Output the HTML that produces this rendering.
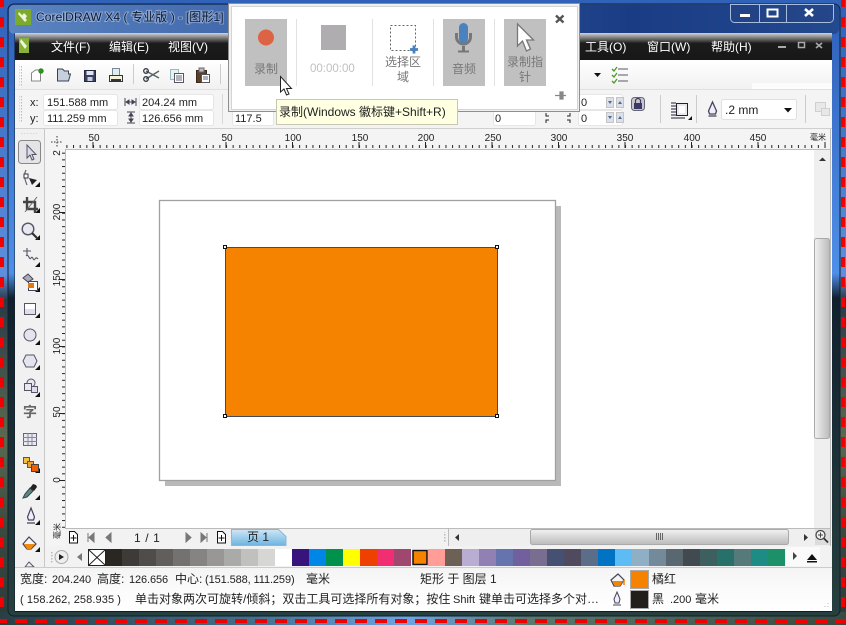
<!DOCTYPE html>
<html><head><meta charset="utf-8"><style>
html,body{margin:0;padding:0;background:#fff;width:846px;height:625px;overflow:hidden}
svg{display:block;position:absolute;left:0;top:0}
text{font-family:"Liberation Sans","Noto Sans CJK SC",sans-serif;font-size:12px;fill:#222;white-space:pre}
.m{fill:#fff;font-size:12px}
.s{font-size:11px}
.r{font-size:10px;fill:#222}
.g{fill:#777}
</style></head><body>
<svg width="846" height="625" viewBox="0 0 846 625" xmlns="http://www.w3.org/2000/svg">
<defs>
<linearGradient id="desk" x1="0" y1="0" x2="0" y2="1"><stop offset="0" stop-color="#2f62b8"/><stop offset=".44" stop-color="#5f8fdc"/><stop offset=".48" stop-color="#2a3a48"/><stop offset=".7" stop-color="#5a6a50"/><stop offset=".85" stop-color="#3a4a40"/><stop offset="1" stop-color="#2a3a3a"/></linearGradient>
<linearGradient id="side" x1="0" y1="0" x2="0" y2="1"><stop offset="0" stop-color="#2f5fb8"/><stop offset=".44" stop-color="#4f8fe8"/><stop offset=".48" stop-color="#12202e"/><stop offset="1" stop-color="#27403f"/></linearGradient>
<linearGradient id="title" x1="0" y1="0" x2="1" y2="0"><stop offset="0" stop-color="#5b84c2"/><stop offset=".3" stop-color="#3e66aa"/><stop offset=".75" stop-color="#1a3c84"/><stop offset="1" stop-color="#23498f"/></linearGradient>
<linearGradient id="menu" x1="0" y1="0" x2="0" y2="1"><stop offset="0" stop-color="#d4d4d4"/><stop offset=".12" stop-color="#9a9a9a"/><stop offset=".38" stop-color="#1c1c1c"/><stop offset="1" stop-color="#171717"/></linearGradient>
<linearGradient id="tb" x1="0" y1="0" x2="0" y2="1"><stop offset="0" stop-color="#fff"/><stop offset="1" stop-color="#f1f1f1"/></linearGradient>
<linearGradient id="tab" x1="0" y1="0" x2="0" y2="1"><stop offset="0" stop-color="#cfe6f6"/><stop offset="1" stop-color="#6db4e0"/></linearGradient>
<linearGradient id="thumb" x1="0" y1="0" x2="0" y2="1"><stop offset="0" stop-color="#f2f2f2"/><stop offset=".5" stop-color="#d6d6d6"/><stop offset="1" stop-color="#bbb"/></linearGradient>
<linearGradient id="thumbv" x1="0" y1="0" x2="1" y2="0"><stop offset="0" stop-color="#f2f2f2"/><stop offset=".5" stop-color="#d6d6d6"/><stop offset="1" stop-color="#bbb"/></linearGradient>
<linearGradient id="stat" x1="0" y1="0" x2="0" y2="1"><stop offset="0" stop-color="#f4f4f4"/><stop offset=".5" stop-color="#fbfbfb"/><stop offset="1" stop-color="#fff"/></linearGradient>
<linearGradient id="btm" x1="0" y1="0" x2="1" y2="0"><stop offset="0" stop-color="#2a3f44"/><stop offset=".3" stop-color="#44708c"/><stop offset=".48" stop-color="#6ea4e4"/><stop offset=".62" stop-color="#5a7a70"/><stop offset="1" stop-color="#3a4a40"/></linearGradient>
<pattern id="tx" x="93" y="145" width="6.65" height="4" patternUnits="userSpaceOnUse"><rect width="1" height="3" fill="#222"/></pattern>
<pattern id="ty" x="62" y="480" width="3" height="6.68" patternUnits="userSpaceOnUse"><rect width="3" height="1" fill="#222"/></pattern>
<pattern id="gr" width="3" height="3" patternUnits="userSpaceOnUse"><rect width="1.5" height="1.5" fill="#bbb"/></pattern>
</defs>

<!-- desktop and frame -->
<rect width="846" height="625" fill="url(#desk)"/>
<rect x="0" y="612" width="846" height="13" fill="url(#btm)"/>
<rect x="8" y="4" width="832" height="612" rx="6" fill="url(#side)" stroke="#10202c"/>
<rect x="9" y="5" width="830" height="29" rx="5" fill="url(#title)"/>
<rect x="14.5" y="33" width="817" height="579" fill="#0f1c24"/>

<!-- title bar -->
<rect x="15" y="9" width="16" height="16" fill="#7cab2c"/>
<path d="M19 12l8 8-2 2-7-8zM24 13l3 3-3 5-3-4z" fill="#eef5df"/>
<text x="36" y="21" style="font-size:12px;letter-spacing:.1px;fill:#0d1a30;paint-order:stroke;stroke:rgba(215,225,245,.45);stroke-width:2px">CorelDRAW X4 ( 专业版 ) - [图形1]</text>
<path d="M730.500 4.500h103v14a4 4 0 0 1-4 4h-95a4 4 0 0 1-4-4zM759.500 4v18M786.500 4v18" fill="rgba(40,70,130,.35)" stroke="#a8bcdc"/>
<rect x="740" y="14" width="10" height="3" fill="#fff"/>
<rect x="767.500" y="9.500" width="10" height="7" fill="none" stroke="#fff" stroke-width="2"/>
<path d="M805 9l8 7M813 9l-8 7" stroke="#fff" stroke-width="2.600"/>

<!-- menu -->
<rect x="15" y="33" width="817" height="27" fill="url(#menu)"/>
<rect x="19" y="38" width="10" height="15" fill="#86b23a"/>
<path d="M21 39l6 7-2 3-5-7z" fill="#eef5df"/>
<text class="m" x="51" y="51">文件(F)</text>
<text class="m" x="109" y="51">编辑(E)</text>
<text class="m" x="168" y="51">视图(V)</text>
<text class="m" x="585" y="51">工具(O)</text>
<text class="m" x="647" y="51">窗口(W)</text>
<text class="m" x="711" y="51">帮助(H)</text>
<rect x="778" y="46" width="8" height="2" fill="#aaa"/>
<rect x="798.500" y="42.500" width="6" height="5" fill="none" stroke="#aaa" stroke-width="1.500"/>
<path d="M816 43l6 5M822 43l-6 5" stroke="#aaa" stroke-width="1.600"/>

<!-- toolbars -->
<rect x="15" y="60" width="817" height="29" fill="url(#tb)"/>
<rect x="15" y="89" width="817" height="39" fill="#f4f4f4"/>
<rect x="752" y="83" width="80" height="6" fill="#fcfcfc"/>
<rect x="15" y="89" width="817" height="1" fill="#e0e0e0"/>
<rect x="15" y="128" width="817" height="1" fill="#cfcfcf"/>
<rect x="19" y="66" width="3" height="20" fill="url(#gr)"/>
<rect x="19" y="95" width="3" height="27" fill="url(#gr)"/>

<path d="M31.500 73l4-3h5v11h-9z" fill="#fff" stroke="#888"/><circle cx="41" cy="71" r="2.700" fill="#2f8f20"/>
<path d="M57.500 72v-3h5l2 2h4v3h2l-2 7h-11z" fill="#c5d0dc" stroke="#3a4252"/>
<rect x="84.500" y="70.500" width="11" height="11" fill="#3a4060" stroke="#23283c"/><rect x="86.500" y="71" width="7" height="4" fill="#dfe4f0"/><rect x="87.500" y="77" width="5" height="4" fill="#c8cce0"/>
<rect x="112.500" y="68.500" width="7" height="7" fill="#dfeee8" stroke="#789"/><rect x="109.500" y="75.500" width="13" height="6" fill="#f6f2dc" stroke="#333"/><rect x="111" y="79" width="10" height="2" fill="#333"/>
<rect x="133" y="64" width="1" height="20" fill="#ccc"/>
<path d="M146 71l13 7M146 79l13-8" stroke="#566" stroke-width="1.500"/><circle cx="146" cy="71" r="2.300" fill="none" stroke="#334" stroke-width="1.300"/><circle cx="146" cy="79" r="2.300" fill="none" stroke="#334" stroke-width="1.300"/>
<rect x="170.500" y="69.500" width="8" height="10" fill="#e4f2f0" stroke="#9bb"/><rect x="174.500" y="73.500" width="9" height="9" fill="#fff" stroke="#556"/><path d="M176 76h6M176 78h6M176 80h6" stroke="#667"/>
<rect x="196.500" y="70.500" width="10" height="12" fill="#5a3f28" stroke="#3a2818"/><rect x="199" y="68" width="5" height="4" fill="#bbb" stroke="#667"/><rect x="201.500" y="74.500" width="8" height="8" fill="#fff" stroke="#556"/><path d="M203 77h5M203 79h5" stroke="#667"/>
<rect x="220" y="64" width="1" height="20" fill="#ccc"/>
<path d="M594 73h7l-3.500 4z" fill="#111"/>
<path d="M618 69h10M618 75h10M618 81h10" stroke="#778" stroke-width="1.200"/><path d="M612 69l2 2 3-4M612 75l2 2 3-4M612 81l2 2 3-4" stroke="#4a9a20" stroke-width="1.300" fill="none"/>

<!-- property bar -->
<text class="s" x="30" y="106">x:</text>
<text class="s" x="30" y="122">y:</text>
<rect x="43.500" y="94.500" width="74" height="15" rx="2" fill="#fff" stroke="#e6e6e6"/>
<rect x="43.500" y="110.500" width="74" height="15" rx="2" fill="#fff" stroke="#e6e6e6"/>
<text class="s" x="47" y="106">151.588 mm</text>
<text class="s" x="47" y="122">111.259 mm</text>
<path d="M125 98v8M136 98v8M126 102h9M126 102l3-2v4zM135 102l-3-2v4z" stroke="#445" fill="#445"/>
<path d="M127 112h8M127 123h8M131 113v9M131 113l-2 3h4zM131 122l-2-3h4z" stroke="#445" fill="#445"/>
<rect x="139.500" y="94.500" width="74" height="15" rx="2" fill="#fff" stroke="#e6e6e6"/>
<rect x="139.500" y="110.500" width="74" height="15" rx="2" fill="#fff" stroke="#e6e6e6"/>
<text class="s" x="142" y="106">204.24 mm</text>
<text class="s" x="142" y="122">126.656 mm</text>
<rect x="222" y="94" width="1" height="30" fill="#d8d8d8"/>
<rect x="232.500" y="110.500" width="41" height="15" rx="2" fill="#fff" stroke="#e6e6e6"/>
<text class="s" x="235" y="122">117.5</text>
<rect x="493.500" y="110.500" width="42" height="15" rx="2" fill="#fff" stroke="#e6e6e6"/>
<text class="s" x="495" y="122">0</text>
<path d="M546 113v3h3M546 123v-3h3M570 113v3h-3M570 123v-3h-3" fill="none" stroke="#222"/>
<rect x="578.500" y="94.500" width="44" height="15" rx="2" fill="#fff" stroke="#e6e6e6"/>
<rect x="578.500" y="110.500" width="44" height="15" rx="2" fill="#fff" stroke="#e6e6e6"/>
<text class="s" x="581" y="106">0</text>
<text class="s" x="581" y="122">0</text>
<g fill="#dde0e8" stroke="#c4c4c8"><rect x="606.500" y="97.500" width="7" height="10"/><rect x="616.500" y="97.500" width="7" height="10"/><rect x="606.500" y="112.500" width="7" height="10"/><rect x="616.500" y="112.500" width="7" height="10"/></g>
<path d="M608 101h4l-2 3zM608 116h4l-2 3zM618 104h4l-2-3zM618 119h4l-2-3z" fill="#4a6a9a"/>
<rect x="631.500" y="97.500" width="13" height="13" rx="3" fill="#c8c8cc" stroke="#667"/><rect x="634" y="103" width="8" height="6" fill="#3a3a66"/><path d="M635.500 103v-2a2.500 2.500 0 0 1 5 0v2" fill="none" stroke="#3a3a66" stroke-width="1.200"/>
<rect x="660" y="95" width="1" height="28" fill="#ccc"/>
<rect x="676.500" y="103.500" width="11" height="12" fill="#e8e8ee" stroke="#223"/><rect x="679" y="106" width="6" height="7" fill="#fff"/><path d="M671 103h5M671 106h5M671 109h5M671 112h5M671 115h5M671 118h14" stroke="#223"/><path d="M688 120l4-4v4z" fill="#111"/>
<rect x="696" y="95" width="1" height="28" fill="#ccc"/>
<path d="M712.500 102l4 9-1 3h-6l-1-3zM708.500 116h8" fill="#eef" stroke="#445" stroke-width="1.300"/>
<rect x="721.500" y="99.500" width="75" height="20" rx="2" fill="#fff" stroke="#e0e0e0"/>
<text x="725" y="114">.2 mm</text>
<path d="M784 108h8l-4 4.500z" fill="#111"/>
<rect x="805" y="95" width="1" height="28" fill="#ccc"/>
<rect x="815.500" y="102.500" width="10" height="9" fill="#e8e8e8" stroke="#d0d0d0"/><rect x="821.500" y="108.500" width="8" height="7" fill="#e8e8e8" stroke="#d0d0d0"/>

<!-- left toolbox -->
<rect x="15" y="129" width="30" height="439" fill="#f1f1f1"/>
<rect x="44" y="129" width="1" height="438" fill="#c8c8c8"/>
<rect x="21" y="133" width="18" height="2" fill="url(#gr)"/>
<rect x="18.500" y="140.500" width="22" height="23" rx="3" fill="#e4e4e6" stroke="#888"/>
<path d="M27 145v13l3-3 2 5 2-1-2-4.500h4z" fill="#dcdce8" stroke="#556"/>
<path d="M40 182v5h-5zM40 208v5h-5zM40 235v5h-5zM40 262v5h-5zM40 287v5h-5zM40 313v5h-5zM40 340v5h-5zM40 365v5h-5zM40 392v5h-5zM40 468v5h-5zM40 495v5h-5zM40 520v5h-5zM40 547v5h-5z" fill="#111"/>
<path d="M26 170c-2 4-2 8 1 15" fill="none" stroke="#667" stroke-width="1.200"/><rect x="24" y="174" width="4" height="4" fill="#fff" stroke="#334"/><path d="M29 178l8 2-5 5z" fill="#222"/>
<path d="M27 197v12h11M23 202h12v11" fill="none" stroke="#444" stroke-width="2.400"/><path d="M25 212l12-15" stroke="#667"/>
<circle cx="28" cy="229" r="5.800" fill="#e8e8f0" stroke="#556" stroke-width="1.400"/><path d="M32 233l6 6" stroke="#333" stroke-width="2.200"/>
<path d="M27 248v7M23 251h8M26 256c3-3 3 5 5 2s2 4 4 1 2 1 3-1" fill="none" stroke="#556" stroke-width="1.100"/>
<path d="M23 278l5-4 5 5-5 3z" fill="#aab" stroke="#445"/><rect x="28.500" y="281.500" width="9" height="9" fill="#fff" stroke="#445"/><path d="M28 283h6v5h-6z" fill="#e07a10"/>
<rect x="24.500" y="303.500" width="11" height="11" fill="#e0e0ea" stroke="#556"/><rect x="25" y="304" width="10" height="5" fill="#fff"/>
<circle cx="30" cy="335" r="6" fill="#e4e4ee" stroke="#556"/>
<path d="M26 355h8l3 6-3 6h-8l-3-6z" fill="#e4e4ee" stroke="#556"/>
<circle cx="31" cy="383" r="4" fill="#e8e8ee" stroke="#556"/><rect x="24.500" y="383.500" width="7" height="7" fill="#e8e8ee" stroke="#556"/><rect x="31.500" y="386.500" width="6" height="6" fill="#dde" stroke="#556"/>
<text x="23" y="417" style="font-size:14px;font-weight:bold;fill:#666">字</text>
<rect x="23.500" y="433.500" width="13" height="12" fill="#e8e8f2" stroke="#667"/><path d="M23 437.500h14M23 441.500h14M28 433v12M32 433v12" stroke="#889"/>
<rect x="23.500" y="457.500" width="6" height="6" fill="#f0c040" stroke="#556"/><rect x="27.500" y="461.500" width="6" height="6" fill="#f0a030" stroke="#556"/><rect x="31.500" y="464.500" width="7" height="7" fill="#f06000" stroke="#444"/>
<path d="M23 498l2-4 5-6 3 3-6 6z" fill="#5a8a80" stroke="#345"/><path d="M30 488l3-4 3 1 1 2-3 4z" fill="#222"/>
<path d="M31 508l3.500 9-1 3h-5l-1-3zM27 523h8" fill="#eef" stroke="#445" stroke-width="1.200"/>
<path d="M23 544l6-7 7 7-5 5h-4z" fill="#f4f4f4" stroke="#445" stroke-width="1.200"/><path d="M24 544h11l-4 5h-4z" fill="#f08a10"/>
<path d="M25 567l4-5 5 5z" fill="#eee" stroke="#556"/>

<!-- rulers -->
<rect x="45" y="129" width="21" height="417" fill="#f4f4f4"/>
<rect x="45" y="129" width="787" height="21" fill="#f4f4f4"/>
<rect x="65" y="149" width="767" height="1" fill="#bdbdbd"/>
<rect x="65" y="150" width="1" height="379" fill="#bdbdbd"/>
<rect x="66" y="145" width="764" height="3" fill="url(#tx)"/>
<rect x="62" y="150" width="3" height="378" fill="url(#ty)"/>
<path d="M93 142v6M226 142v6M292.500 142v6M359 142v6M425.500 142v6M492 142v6M558.500 142v6M625 142v6M691.500 142v6M758 142v6M825 142v6" stroke="#222"/>
<path d="M59 212.500h6M59 279.500h6M59 346.500h6M59 413.500h6M59 480.500h6" stroke="#222"/>
<path d="M57 136v12M51 142h12" stroke="#333" stroke-dasharray="1.500 1.500"/>
<g text-anchor="middle">
<text class="r" x="94" y="141">50</text><text class="r" x="227" y="141">50</text><text class="r" x="293" y="141">100</text><text class="r" x="360" y="141">150</text><text class="r" x="426" y="141">200</text><text class="r" x="493" y="141">250</text><text class="r" x="559" y="141">300</text><text class="r" x="625" y="141">350</text><text class="r" x="692" y="141">400</text><text class="r" x="758" y="141">450</text>
</g>
<text x="810" y="140" style="font-size:8px">毫米</text>
<g text-anchor="middle">
<text class="r" transform="translate(60 153) rotate(-90)">2</text>
<text class="r" transform="translate(60 212) rotate(-90)">200</text>
<text class="r" transform="translate(60 278) rotate(-90)">150</text>
<text class="r" transform="translate(60 346) rotate(-90)">100</text>
<text class="r" transform="translate(60 412) rotate(-90)">50</text>
<text class="r" transform="translate(60 480) rotate(-90)">0</text>
<text transform="translate(60 531) rotate(-90)" style="font-size:8px">毫米</text>
</g>

<!-- canvas -->
<rect x="66" y="150" width="748" height="378" fill="#fff"/>
<rect x="165" y="206" width="396" height="280" fill="#b9b9b9"/>
<rect x="159.500" y="200.500" width="396" height="280" fill="#fff" stroke="#a0a0a0" stroke-width="1.300"/>
<rect x="225.500" y="247.500" width="272" height="169" fill="#f58300" stroke="#3f4a5e"/>
<g fill="#fff" stroke="#111"><rect x="223.500" y="245.500" width="3" height="3"/><rect x="495.500" y="245.500" width="3" height="3"/><rect x="223.500" y="414.500" width="3" height="3"/><rect x="495.500" y="414.500" width="3" height="3"/></g>

<!-- vertical scrollbar -->
<rect x="814" y="150" width="16" height="378" fill="#efefef"/>
<rect x="830" y="129" width="1" height="417" fill="#bbb"/>
<rect x="831" y="129" width="1" height="417" fill="#f4f4f4"/>
<path d="M819 161h7l-3.500-3.500z" fill="#333"/>
<rect x="814.500" y="238.500" width="15" height="200" rx="2" fill="url(#thumbv)" stroke="#aaa"/>

<!-- navigation row -->
<rect x="66" y="528" width="764" height="1" fill="#bbb"/>
<rect x="66" y="529" width="384" height="17" fill="#f2f2f2"/>
<g fill="#fff" stroke="#111"><path d="M69.500 531.500h5l3 3v8.500h-8z"/><path d="M217.500 531.500h5l3 3v8.500h-8z"/></g>
<path d="M73.500 535v6M70.500 538h6M221.500 535v6M218.500 538h6" stroke="#111"/>
<path d="M88 533v9M94 533l-5 4.500 5 4.500zM111 533l-5 4.500 5 4.500zM186 533l5 4.500-5 4.500zM201 533l5 4.500-5 4.500zM207 533v9" fill="#777" stroke="#777"/>
<text x="134" y="542" style="letter-spacing:.6px">1 / 1</text>
<path d="M231.500 545.500v-16h47l7.500 7v9z" fill="url(#tab)" stroke="#8ab8d8"/>
<text x="247" y="541">页 1</text>
<rect x="443" y="532" width="3" height="11" fill="url(#gr)"/>
<rect x="448" y="529" width="1" height="17" fill="#bbb"/>
<rect x="449" y="529" width="381" height="17" fill="#efefef"/>
<path d="M459 534v7l-4-3.500z" fill="#333"/>
<rect x="530.500" y="529.500" width="258" height="15" rx="2" fill="url(#thumb)" stroke="#aaa"/>
<path d="M656.500 533v7M658.500 533v7M660.500 533v7M662.500 533v7" stroke="#666"/>
<path d="M804 534v7l4-3.500z" fill="#333"/>
<rect x="815" y="529" width="15" height="16" fill="#dcdcdc"/>
<circle cx="820.500" cy="535" r="4.500" fill="#f0f0f0" stroke="#444" stroke-width="1.200"/><path d="M824 538.500l4 4" stroke="#333" stroke-width="1.800"/><path d="M818 535h5M820.500 532.500v5" stroke="#444"/>

<!-- palette -->
<rect x="45" y="546" width="787" height="21" fill="#f2f2f2"/>
<rect x="786" y="547" width="34" height="19" fill="#fafafa"/>
<rect x="50" y="551" width="3" height="13" fill="url(#gr)"/>
<circle cx="61.500" cy="557" r="6.500" fill="#eee" stroke="#aaa"/><path d="M59 554v6l5-3z" fill="#222"/>
<path d="M82 553v8l-5-4z" fill="#777"/>
<g stroke="none">
<rect x="88" y="549" width="17" height="17" fill="#fff"/>
<rect x="105" y="549" width="17" height="17" fill="#2a2622"/><rect x="122" y="549" width="17" height="17" fill="#3e3a37"/><rect x="139" y="549" width="17" height="17" fill="#504c4a"/><rect x="156" y="549" width="17" height="17" fill="#625e5c"/><rect x="173" y="549" width="17" height="17" fill="#747270"/><rect x="190" y="549" width="17" height="17" fill="#868482"/><rect x="207" y="549" width="17" height="17" fill="#989795"/><rect x="224" y="549" width="17" height="17" fill="#aaaaa8"/><rect x="241" y="549" width="17" height="17" fill="#c0c0be"/><rect x="258" y="549" width="17" height="17" fill="#d6d6d5"/><rect x="275" y="549" width="17" height="17" fill="#fff"/><rect x="292" y="549" width="17" height="17" fill="#37137c"/><rect x="309" y="549" width="17" height="17" fill="#0086e6"/><rect x="326" y="549" width="17" height="17" fill="#00924c"/><rect x="343" y="549" width="17" height="17" fill="#ffff00"/><rect x="360" y="549" width="17" height="17" fill="#ee4000"/><rect x="377" y="549" width="17" height="17" fill="#f22e72"/><rect x="394" y="549" width="17" height="17" fill="#a0476f"/><rect x="411" y="549" width="17" height="17" fill="#fff"/><rect x="428" y="549" width="17" height="17" fill="#ff9d96"/><rect x="445" y="549" width="17" height="17" fill="#6d6156"/><rect x="462" y="549" width="17" height="17" fill="#b9aed1"/><rect x="479" y="549" width="17" height="17" fill="#9080b3"/><rect x="496" y="549" width="17" height="17" fill="#6574af"/><rect x="513" y="549" width="17" height="17" fill="#72609e"/><rect x="530" y="549" width="17" height="17" fill="#796d90"/><rect x="547" y="549" width="17" height="17" fill="#465073"/><rect x="564" y="549" width="17" height="17" fill="#4f4a5e"/><rect x="581" y="549" width="17" height="17" fill="#5c6d8a"/><rect x="598" y="549" width="17" height="17" fill="#0073c5"/><rect x="615" y="549" width="17" height="17" fill="#5ebcf5"/><rect x="632" y="549" width="17" height="17" fill="#8fafc5"/><rect x="649" y="549" width="17" height="17" fill="#738a9a"/><rect x="666" y="549" width="17" height="17" fill="#596870"/><rect x="683" y="549" width="17" height="17" fill="#404a4f"/><rect x="700" y="549" width="17" height="17" fill="#3e5f5f"/><rect x="717" y="549" width="17" height="17" fill="#28706a"/><rect x="734" y="549" width="17" height="17" fill="#567a7a"/><rect x="751" y="549" width="17" height="17" fill="#1c8c85"/><rect x="768" y="549" width="17" height="17" fill="#1c9068"/>
</g>
<rect x="88.500" y="549.500" width="17" height="16" fill="none" stroke="#222"/><path d="M89 550l16 15M105 550l-16 15" stroke="#222"/>
<rect x="413" y="550.500" width="14" height="14" fill="#f58300" stroke="#111" stroke-width="1.500"/>
<path d="M793 552v8l4-4z" fill="#444"/>
<path d="M807 560l5-6 5 6zM807 561h10v1.500h-10z" fill="#111"/>

<!-- status bar -->
<rect x="15" y="568" width="817" height="43" fill="url(#stat)"/>
<rect x="15" y="567" width="817" height="1" fill="#ccc"/>
<text x="20" y="583">宽度:</text><text class="s" x="52" y="583" style="letter-spacing:-.1px">204.240</text>
<text x="97" y="583">高度:</text><text class="s" x="129" y="583" style="letter-spacing:-.1px">126.656</text>
<text x="175" y="583">中心:</text><text class="s" x="205" y="583" style="letter-spacing:-.1px">(151.588, 111.259)</text>
<text x="306" y="583">毫米</text>
<text x="420" y="583">矩形 于 图层 1</text>
<text class="s" x="20" y="603" style="letter-spacing:.1px">( 158.262, 258.935 )</text>
<text x="135" y="603">单击对象两次可旋转/倾斜；双击工具可选择所有对象；按住</text>
<text class="s" x="453" y="603">Shift</text>
<text x="479" y="603">键单击可选择多个对…</text>
<path d="M611 580l7-6 6 6-4 6h-6z" fill="#f4f4f4" stroke="#445" stroke-width="1.200"/><path d="M612 581h11l-3 5h-5z" fill="#f58300"/><path d="M624 580v5" stroke="#f58300" stroke-width="1.500"/>
<rect x="630.500" y="570.500" width="18" height="18" fill="#f58300" stroke="#aaa"/>
<text x="652" y="583">橘红</text>
<path d="M617 592l3 7-1 4h-4l-1-4zM613 605h8" fill="#eef" stroke="#445"/>
<rect x="630.500" y="590.500" width="18" height="18" fill="#221f1b" stroke="#aaa"/>
<text x="652" y="603">黑</text><text class="s" x="670" y="603">.200</text><text x="695" y="603">毫米</text>
<path d="M828 606v1M825 606v1M828 603v1" stroke="#bbb"/>

<!-- edge dashes -->
<g fill="#f00000">
<path d="M0-3h4v10H0zM0 17h4v10H0zM0 37h4v10H0zM0 57h4v10H0zM0 77h4v10H0zM0 97h4v10H0zM0 117h4v10H0zM0 137h4v10H0zM0 157h4v10H0zM0 177h4v10H0zM0 197h4v10H0zM0 217h4v10H0zM0 237h4v10H0zM0 257h4v10H0zM0 277h4v10H0zM0 297h4v10H0zM0 317h4v10H0zM0 337h4v10H0zM0 357h4v10H0zM0 377h4v10H0zM0 397h4v10H0zM0 417h4v10H0zM0 437h4v10H0zM0 457h4v10H0zM0 477h4v10H0zM0 497h4v10H0zM0 517h4v10H0zM0 537h4v10H0zM0 557h4v10H0zM0 577h4v10H0zM0 597h4v10H0z"/>
<path d="M841-3h4v10h-4zM841 17h4v10h-4zM841 37h4v10h-4zM841 57h4v10h-4zM841 77h4v10h-4zM841 97h4v10h-4zM841 117h4v10h-4zM841 137h4v10h-4zM841 157h4v10h-4zM841 177h4v10h-4zM841 197h4v10h-4zM841 217h4v10h-4zM841 237h4v10h-4zM841 257h4v10h-4zM841 277h4v10h-4zM841 297h4v10h-4zM841 317h4v10h-4zM841 337h4v10h-4zM841 357h4v10h-4zM841 377h4v10h-4zM841 397h4v10h-4zM841 417h4v10h-4zM841 437h4v10h-4zM841 457h4v10h-4zM841 477h4v10h-4zM841 497h4v10h-4zM841 517h4v10h-4zM841 537h4v10h-4zM841 557h4v10h-4zM841 577h4v10h-4zM841 597h4v10h-4z"/>
<path d="M-5 619h12v4H-5zM15 619h12v4H15zM35 619h12v4H35zM55 619h12v4H55zM75 619h12v4H75zM95 619h12v4H95zM115 619h12v4H115zM135 619h12v4H135zM155 619h12v4H155zM175 619h12v4H175zM195 619h12v4H195zM215 619h12v4H215zM235 619h12v4H235zM255 619h12v4H255zM275 619h12v4H275zM295 619h12v4H295zM315 619h12v4H315zM335 619h12v4H335zM355 619h12v4H355zM375 619h12v4H375zM395 619h12v4H395zM415 619h12v4H415zM435 619h12v4H435zM455 619h12v4H455zM475 619h12v4H475zM495 619h12v4H495zM515 619h12v4H515zM535 619h12v4H535zM555 619h12v4H555zM575 619h12v4H575zM595 619h12v4H595zM615 619h12v4H615zM635 619h12v4H635zM655 619h12v4H655zM675 619h12v4H675zM695 619h12v4H695zM715 619h12v4H715zM735 619h12v4H735zM755 619h12v4H755zM775 619h12v4H775zM795 619h12v4H795zM815 619h12v4H815zM835 619h12v4H835z"/>
</g>

<!-- floating recorder panel -->
<rect x="228.500" y="3.500" width="351" height="108" fill="#f0f0f0" stroke="#8f8f8f"/>
<rect x="231.500" y="6.500" width="346" height="103" fill="#fff" stroke="#d4d4d4"/>
<rect x="245" y="19" width="42" height="67" fill="#c0c0c0"/>
<circle cx="266" cy="37.500" r="8" fill="#dd6345"/>
<text class="g" x="254" y="73">录制</text>
<rect x="296" y="19" width="1" height="67" fill="#e2e2e2"/>
<rect x="321" y="25" width="25" height="25" fill="#b0adb0"/>
<text x="310" y="72" style="font-size:11.500px;fill:#c0c0c0">00:00:00</text>
<rect x="372" y="19" width="1" height="67" fill="#e2e2e2"/>
<rect x="390.500" y="25.500" width="25" height="25" fill="none" stroke="#666" stroke-dasharray="2 2"/>
<path d="M414 45.500v8M410 49.500h8" stroke="#4a80bc" stroke-width="2.800"/>
<text class="g" x="385" y="66">选择区</text>
<text class="g" x="397" y="81">域</text>
<rect x="433" y="19" width="1" height="67" fill="#e2e2e2"/>
<rect x="443" y="19" width="42" height="67" fill="#c0c0c0"/>
<path d="M456.500 33v4a7 7 0 0 0 14 0v-4" fill="none" stroke="#777" stroke-width="3"/>
<rect x="459" y="23" width="9" height="20" rx="4.500" fill="#4a82be"/>
<path d="M463.500 46v5" stroke="#777" stroke-width="3"/>
<path d="M458 51.500h11" stroke="#777" stroke-width="2"/>
<text class="g" x="452" y="73">音频</text>
<rect x="494" y="19" width="1" height="67" fill="#e2e2e2"/>
<rect x="504" y="19" width="42" height="67" fill="#c0c0c0"/>
<path d="M517.500 24v22l5-5 4 10 4-2-4-9h7z" fill="#fff" stroke="#777" stroke-width="1.300"/>
<text class="g" x="507" y="66">录制指</text>
<text class="g" x="519" y="81">针</text>
<path d="M556 15.500l7.500 7M563.500 15.500l-7.500 7" stroke="#555" stroke-width="2.400"/>
<path d="M555 95.500h5M560 92v7M560 92h3v7h-3zM563 95.500h3" fill="#888" stroke="#888" stroke-width="1.200"/>

<!-- tooltip and cursor -->
<rect x="276.500" y="99.500" width="181" height="25" fill="#ffffe1" stroke="#c8c8b0"/>
<text x="279" y="116">录制(Windows 徽标键+Shift+R)</text>
<path d="M280.500 76.500v15.500l3.500-3 2.500 6 2.500-1-2.500-5.500h5z" fill="#fff" stroke="#222"/>
</svg>
</body></html>
